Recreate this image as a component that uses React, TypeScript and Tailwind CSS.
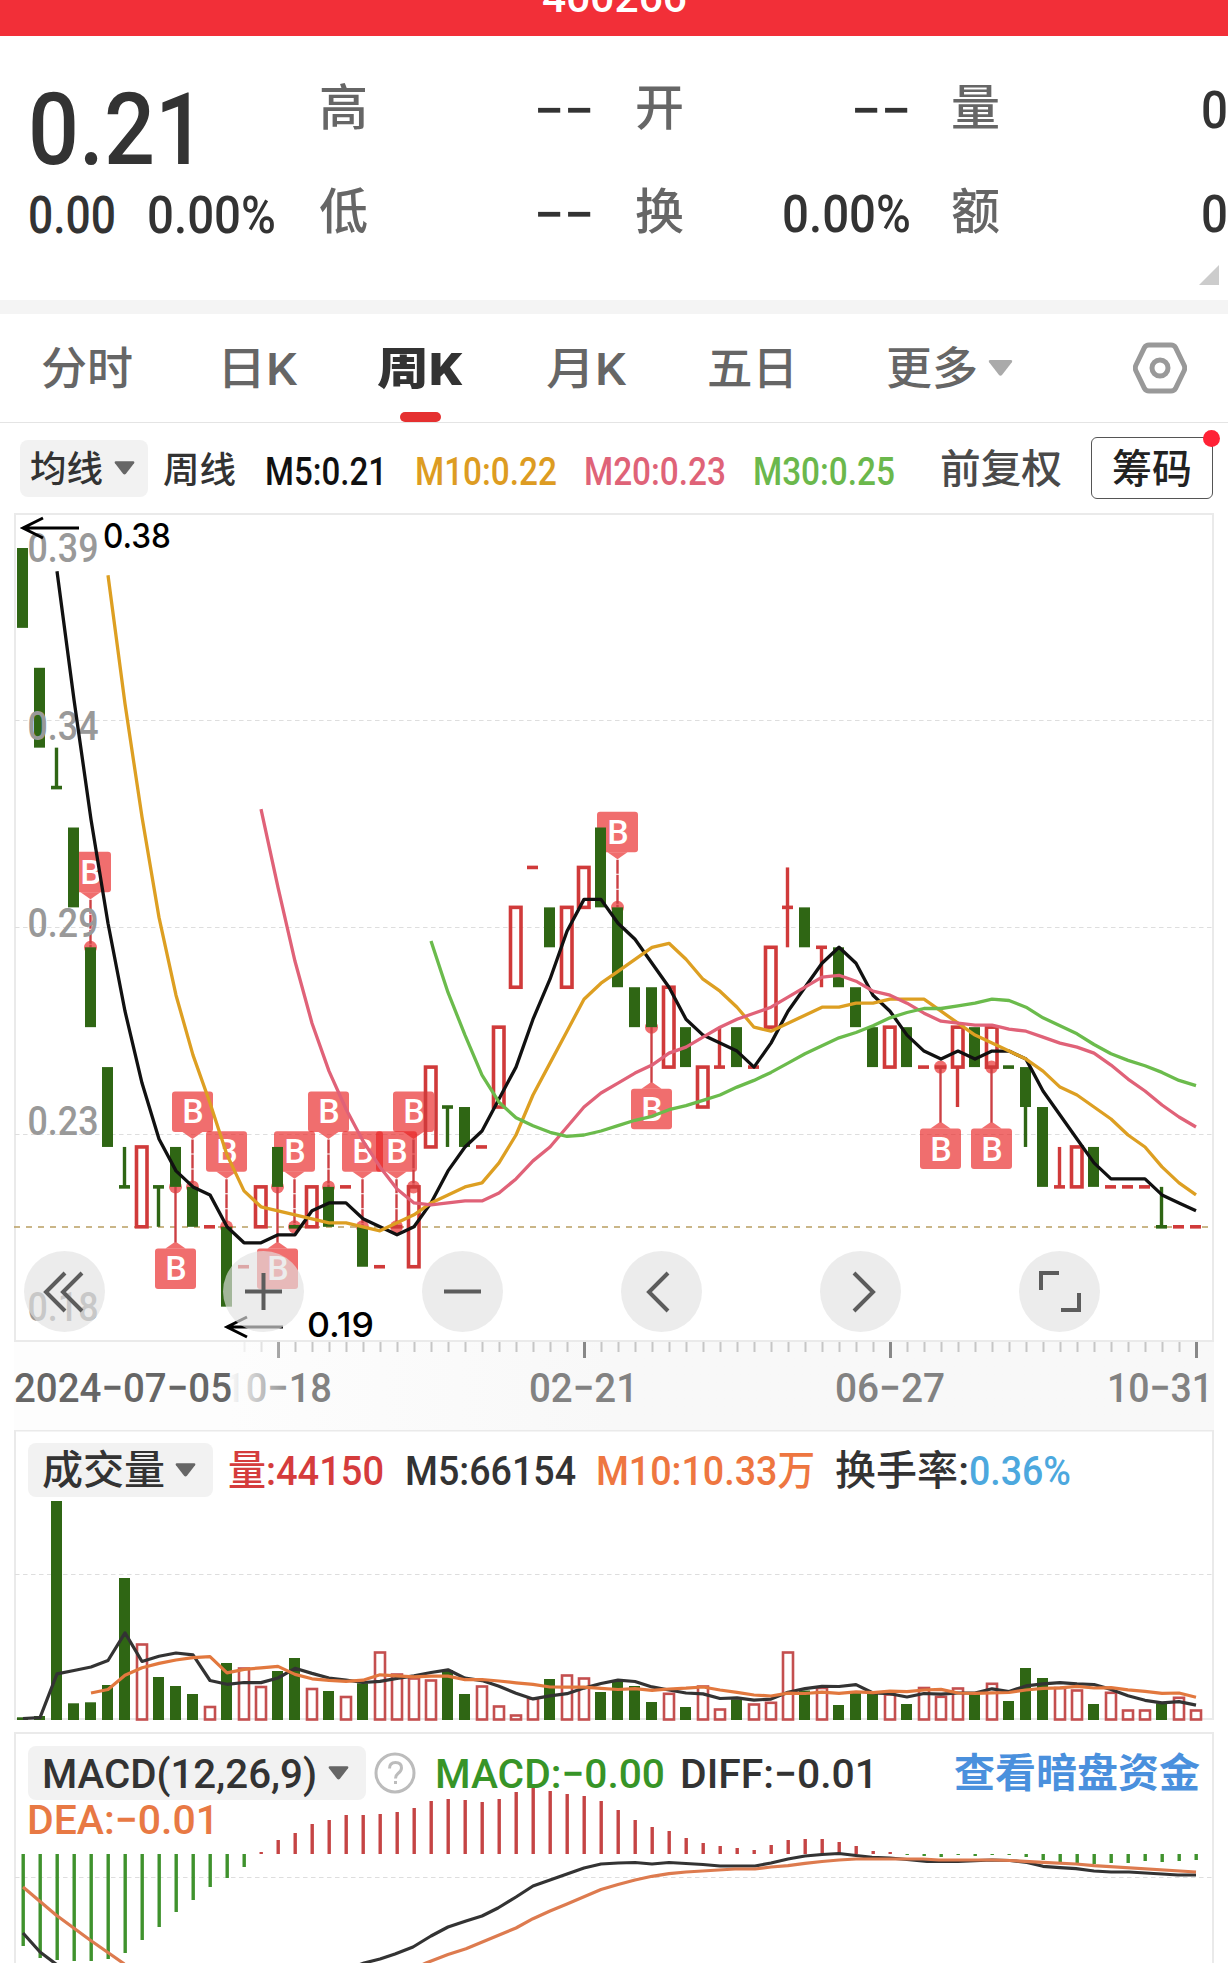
import { useLayoutEffect, useRef, useState } from 'react';
import type { ReactNode } from 'react';

const GREEN = '#2f6614';
const RED = '#d03a3a';
const STEP = 17;
const X0 = 22.5;

const cx = (i: number) => X0 + i * STEP;
// price in cents -> y
const py = (p: number) => 548 + (38 - p) * 39.93;

// [kind, open, close, high, low]
type Candle = ['g' | 'r', number, number, number?, number?];

const candles: Candle[] = [
    ['g', 38, 36], ['g', 35, 33], ['g', 32, 32, 33, 32], ['g', 31, 29], ['g', 28, 26],
    ['g', 25, 23], ['g', 22, 22, 23, 22], ['r', 21, 23], ['g', 22, 22, 22, 21], ['g', 23, 22],
    ['g', 22, 21], ['r', 21, 21], ['g', 21, 19], ['r', 20, 20], ['r', 21, 22],
    ['g', 23, 22], ['g', 21, 21], ['r', 21, 22], ['g', 22, 21], ['r', 22, 22],
    ['g', 21, 20], ['r', 20, 20], ['r', 21, 21], ['r', 20, 22], ['r', 23, 25],
    ['g', 24, 24, 24, 23], ['g', 24, 23], ['r', 23, 23], ['r', 24, 26], ['r', 27, 29],
    ['r', 30, 30], ['g', 29, 28], ['r', 27, 29], ['r', 29, 30], ['g', 31, 29],
    ['g', 29, 27], ['g', 27, 26], ['g', 27, 26], ['r', 25, 27], ['g', 26, 25],
    ['r', 24, 25], ['r', 25, 25, 26, 25], ['g', 26, 25], ['r', 25, 25], ['r', 26, 28],
    ['r', 29, 29, 30, 28], ['g', 29, 28], ['r', 28, 28, 28, 27], ['g', 28, 27], ['g', 27, 26],
    ['g', 26, 25], ['r', 25, 26], ['g', 26, 25], ['r', 25, 25], ['r', 25, 25],
    ['r', 25, 26, 26, 24], ['g', 26, 25], ['r', 25, 26], ['g', 25, 25], ['g', 25, 24, 25, 23],
    ['g', 24, 22], ['r', 22, 22, 23, 22], ['r', 22, 23], ['g', 23, 22], ['r', 22, 22],
    ['r', 22, 22], ['r', 22, 22], ['g', 21, 21, 22, 21], ['r', 21, 21], ['r', 21, 21],
];

const buys: { i: number; p: number; up?: boolean }[] = [
    { i: 4, p: 28, up: true }, { i: 9, p: 22 }, { i: 10, p: 22, up: true }, { i: 12, p: 21, up: true },
    { i: 15, p: 22 }, { i: 16, p: 21, up: true }, { i: 18, p: 22, up: true }, { i: 20, p: 21, up: true },
    { i: 22, p: 21, up: true }, { i: 23, p: 22, up: true }, { i: 35, p: 29, up: true }, { i: 37, p: 26 },
    { i: 54, p: 25 }, { i: 57, p: 25 },
];

const volumes = [
    2.7, 4, 219, 16.7, 17.7, 35, 142, 76, 43, 34, 26, 13.5, 57, 52, 33.5, 49, 62, 31.5, 29, 23.5,
    36.7, 68, 46, 42, 40, 50, 26, 34, 14, 5, 21.7, 41, 45, 42, 28, 38.5, 34, 18, 26.7, 13,
    34, 11, 20.7, 16, 17.7, 68, 29.5, 32.5, 15, 27, 26, 26, 16, 32.5, 23.7, 32, 26, 36.7, 19, 52,
    42, 32.5, 30, 16, 27.7, 10, 10, 16.7, 22.7, 10,
];

const macd = [
    -92, -104, -106, -107, -107, -105, -99, -86, -73, -58, -46, -33, -24, -13, 2, 14, 21, 30, 34, 39,
    39, 40, 42, 46, 53, 55, 54, 52, 55, 62, 66, 63, 60, 58, 53, 44, 34, 27, 23, 16,
    11, 8, 6, 4, 9, 14, 15, 15, 12, 8, 3, 2, -1, -2, -3, -1, -2, -1, -1, -3,
    -6, -10, -9, -10, -9, -9, -7, -8, -7, -6,
];

const diffPts =
    '23,1933 40,1952 56,1964 72,1978 200,2040 320,1980 364,1963 380,1959 395,1954 413,1947 431,1936 448,1927 466,1921 482,1916 498,1908 516,1897 533,1886 550,1880 567,1874 584,1868 601,1864 618,1863 635,1862.5 652,1864 669,1862.5 703,1864.5 720,1866 755,1866 771,1863 788,1859 805,1856 822,1854.5 839,1853.5 856,1855.5 872,1857.3 890,1858 907,1859.5 927,1861.3 958,1861.3 992,1860 1010,1860.5 1027,1862.5 1043,1866.3 1060,1867.7 1076,1868.7 1094,1871 1111,1872 1129,1872 1162,1874 1178,1875 1196,1875';
const deaPts =
    '23,1887 56,1915 90,1940 123,1963 200,2030 400,1975 426,1963 448,1954.5 466,1948.7 516,1928 533,1918.7 550,1911 567,1904 601,1889.5 618,1884.5 635,1880 652,1876.3 669,1873.7 686,1872 735,1869 755,1869 771,1867 788,1865.7 805,1863.3 822,1861.5 839,1860 856,1859 923,1859 939,1860 992,1860 1010,1860.5 1043,1862.3 1076,1864 1094,1865.7 1196,1872';

const closes = candles.map((c) => c[2]);

// head holds the points whose window reaches back before the visible range
function priceLine(n: number, head: number[]) {
    const start = n - 1 - head.length;
    const vals = [...head];
    for (let i = n - 1; i < closes.length; i++) {
        vals.push(closes.slice(i - n + 1, i + 1).reduce((a, b) => a + b, 0) / n);
    }
    return vals.map((v, k) => `${cx(start + k) + 0.5},${py(v).toFixed(1)}`).join(' ');
}

function volumeLine(n: number, from: number) {
    return volumes
        .map((_, i) => {
            const sum = volumes.slice(Math.max(0, i - n + 1), i + 1).reduce((a, b) => a + b, 0);
            return `${cx(i) + 0.5},${(1719 - sum / n).toFixed(1)}`;
        })
        .slice(from)
        .join(' ');
}

// Squeezes its text to the given advance width
function Fit({ w, className = '', children }: { w: number; className?: string; children: ReactNode }) {
    const ref = useRef<HTMLSpanElement>(null);
    const [k, setK] = useState(1);
    useLayoutEffect(() => {
        if (ref.current) setK(w / ref.current.getBoundingClientRect().width);
    }, []);
    return (
        <span className={`inline-block shrink-0 whitespace-nowrap ${className}`} style={{ width: w }}>
            <span ref={ref} className="inline-block origin-left" style={{ transform: `scaleX(${k})` }}>
                {children}
            </span>
        </span>
    );
}

function Caret({ className = '' }: { className?: string }) {
    return (
        <svg viewBox="0 0 22 14" className={`shrink-0 ${className}`} fill="currentColor">
            <path d="M2 0h18q2 0 1 2L12.500 13q-1.500 1.500-3 0L1 2Q0 0 2 0z" />
        </svg>
    );
}

function Quote() {
    return (
        <section className="relative flex h-[264px] pl-[28px] pt-[35px] text-[#333]">
            <div className="-mt-px w-[291px]">
                <div className="h-[120px] text-[101px] leading-[120px] font-medium">
                    <Fit w={178}>0.21</Fit>
                </div>
                <div className="flex gap-[31px] text-[51px] leading-[52px] font-medium">
                    <Fit w={88}>0.00</Fit>
                    <Fit w={129}>0.00%</Fit>
                </div>
            </div>
            <div className="grid grid-cols-[275px_41px_276px_40px_277px] grid-rows-[80px_104px] text-[51px] leading-[80px] font-medium">
                <Stat label="高" w={60}>−−</Stat>
                <i />
                <Stat label="开" w={60}>−−</Stat>
                <i />
                <Stat label="量" w={27}>0</Stat>
                <Stat label="低" w={60} low>−−</Stat>
                <i />
                <Stat label="换" w={129} low>0.00%</Stat>
                <i />
                <Stat label="额" w={27} low>0</Stat>
            </div>
            <svg viewBox="0 0 20 20" className="absolute right-[9px] bottom-[15px] size-5">
                <path d="M20 0v20H0z" fill="#ccc" />
            </svg>
        </section>
    );
}

function Stat({ label, w, low, children }: { label: string; w: number; low?: boolean; children: ReactNode }) {
    return (
        <div className={low ? 'flex justify-between pt-6' : 'flex justify-between'}>
            <span className="-mt-[2px] text-[49px] text-[#666]">{label}</span>
            <Fit w={w}>{children}</Fit>
        </div>
    );
}

function Tabs() {
    return (
        <nav className="relative flex h-[109px] border-b border-[#e4e4e4] pl-[41px] text-[45px] leading-[112px] font-medium text-[#666]">
            <Fit w={92} className="mr-[84px]">分时</Fit>
            <Fit w={80} className="mr-[80px]">日K</Fit>
            <div className="relative mr-[84px] font-black text-[#333]">
                <Fit w={85}>周K</Fit>
                <span className="absolute bottom-0 left-[23px] h-[10px] w-[41px] rounded-full bg-[#e53030]" />
            </div>
            <Fit w={80} className="mr-[81px]">月K</Fit>
            <Fit w={91} className="mr-[88px]">五日</Fit>
            <Fit w={92} className="mr-[10px]">更多</Fit>
            <Caret className="mt-[44px] h-[20px] w-[25px] text-[#aaa]" />
            <svg viewBox="0 0 54 52" className="ml-[120px] mt-[28px] h-[52px] w-[54px]" fill="none" stroke="#999">
                <path d="M16 3h22q3 0 4.500 2.500L51 23q1.500 3 0 6l-8.500 17.500Q41 49 38 49H16q-3 0-4.500-2.500L3 29q-1.500-3 0-6l8.500-17.500Q13 3 16 3z" strokeWidth="5" />
                <circle cx="27" cy="26" r="8" strokeWidth="5" />
            </svg>
        </nav>
    );
}

function Averages() {
    return (
        <div className="flex h-[90px] items-center pl-5 text-[38px] font-medium">
            <div className="flex h-[57px] w-[128px] items-center gap-[11px] rounded-lg bg-[#f2f2f2] pl-[10px] text-[36px] text-[#333]">
                <Fit w={73} className="mt-[3px]">均线</Fit>
                <Caret className="h-[14px] w-[21px] text-[#666]" />
            </div>
            <Fit w={73} className="ml-[15px] mt-[6px] text-[36px] text-[#333]">周线</Fit>
            <Fit w={122} className="ml-[29px] mt-[8px] text-[#111]">M5:0.21</Fit>
            <Fit w={142} className="ml-[28px] mt-[8px] text-[#dd9c22]">M10:0.22</Fit>
            <Fit w={142} className="ml-[27px] mt-[8px] text-[#df6378]">M20:0.23</Fit>
            <Fit w={142} className="ml-[27px] mt-[8px] text-[#6bb84c]">M30:0.25</Fit>
            <Fit w={122} className="ml-[45px] mt-[4px] text-[40px] text-[#4a4a4a]">前复权</Fit>
            <div className="relative ml-[29px] flex h-[62px] w-[122px] items-center justify-center rounded-md border border-[#555] pt-[3px] text-[40px] text-[#222]">
                <Fit w={80}>筹码</Fit>
                <span className="absolute -right-[8px] -top-[8px] size-[17px] rounded-full bg-[#ff2236]" />
            </div>
        </div>
    );
}

function Bar({ c, i }: { c: Candle; i: number }) {
    const [kind, open, close, high, low] = c;
    const x = cx(i);
    const color = kind === 'g' ? GREEN : RED;
    const top = py(Math.max(open, close));
    const bottom = py(Math.min(open, close));
    return (
        <g fill={color} stroke="none">
            {high !== undefined && low !== undefined && (open === close
                ? <rect x={x - 1.7} y={py(high)} width="3.4" height={py(low) - py(high)} />
                : <rect x={x - 1.7} y={bottom} width="3.4" height={py(low) - bottom} />)}
            {open === close && <rect x={x - 5.5} y={top - 1.8} width="11" height="3.6" />}
            {open !== close && kind === 'g' && <rect x={x - 5.5} y={top} width="11" height={bottom - top} />}
            {open !== close && kind === 'r' && (
                <rect x={x - 5} y={top} width="10.500" height={bottom - top} fill="none" stroke={color} strokeWidth="3.600" />
            )}
        </g>
    );
}

function Buy({ i, p, up }: { i: number; p: number; up?: boolean }) {
    const x = cx(i);
    const y = py(p);
    const box = up ? y - 95.5 : y + 61.5;
    return (
        <g>
            <g fill="#e82020" fillOpacity="0.65">
                <circle cx={x} cy={y} r="6.500" />
                <rect x={x - 20.5} y={box} width="41" height="40.500" rx="3" />
                <path d={up ? `M${x - 10} ${box + 40.5}h20l-10 7z` : `M${x - 10} ${box}h20l-10-7z`} />
            </g>
            <line
                x1={x} x2={x} y1={up ? box + 48 : y} y2={up ? y : box - 6}
                stroke="#cc4044" strokeWidth="2.400" strokeDasharray={up ? '14 1' : undefined}
            />
            <text x={x + 0.5} y={box + 32} textAnchor="middle" fontSize="34" fontWeight="500" fill="#fff">B</text>
        </g>
    );
}

const gridLabels = [
    { t: '0.39', y: 562 }, { t: '0.34', y: 739.5 }, { t: '0.29', y: 936.5 },
    { t: '0.23', y: 1134.5 }, { t: '0.18', y: 1321 },
];

const controls: ReactNode[] = [
    <path d="M41 22 22 41l19 19M58 22 39 41l19 19" />,
    <path d="M22 40.500h37M40.500 22v37" />,
    <path d="M22 40.500h37" />,
    <path d="M47 22 28 41l19 19" />,
    <path d="M34 22l19 19-19 19" />,
    <path d="M22 39V22h18M42 59h18V42" />,
];

function PriceChart() {
    return (
        <div className="relative h-[829px]">
            <svg viewBox="0 513 1228 829" className="block h-[829px] w-[1228px]" fill="none">
                <path d="M15 1341V514H1213V1341z" stroke="#eaeaea" strokeWidth="2" />
                <g stroke="#dedede" strokeWidth="1.200" strokeDasharray="4.500 3.500">
                    <path d="M15 720.500H1212M15 927.500H1212M15 1134.500H1212" />
                </g>
                <path d="M14 1227H1210" stroke="#b99e62" strokeWidth="1.700" strokeDasharray="6 6" />
                {buys.map((b) => <Buy key={b.i} {...b} />)}
                {candles.map((c, i) => <Bar key={i} c={c} i={i} />)}
                {gridLabels.map((l) => (
                    <text key={l.t} x="27.500" y={l.y} fontSize="41" fontWeight="500" fill="#999" textLength="71" lengthAdjust="spacingAndGlyphs">{l.t}</text>
                ))}
                <g strokeWidth="3.300" strokeLinejoin="round">
                    <polyline points={priceLine(5, [37.42, 34.2])} stroke="#111" />
                    <polyline points={priceLine(10, [37.32, 34.1, 31.26, 28.75])} stroke="#dd9f22" />
                    <polyline points={priceLine(20, [31.46, 29.5, 27.65, 26.1, 24.9])} stroke="#e06278" />
                    <polyline points={priceLine(30, [28.16, 26.87, 25.8, 24.8, 24.12])} stroke="#6bbb4c" />
                </g>
                <g stroke="#000" strokeWidth="3">
                    <path d="M79 528H23M43 518l-20 10 20 10" />
                    <path d="M283 1327H227M247 1317l-20 10 20 10" />
                </g>
                <g fill="#000" fontSize="34" fontWeight="500" fontFamily="Inter, sans-serif">
                    <text x="103" y="548" textLength="68" lengthAdjust="spacingAndGlyphs">0.38</text>
                    <text x="307" y="1337" textLength="67" lengthAdjust="spacingAndGlyphs">0.19</text>
                </g>
            </svg>
            <div className="absolute bottom-[10px] left-[24px] flex gap-[118px]">
                {controls.map((c, i) => (
                    <button key={i} className="size-[81px] rounded-full bg-[#e2e2e2]/65">
                        <svg viewBox="0 0 81 81" className="size-full" fill="none" stroke="#5c5c5c" strokeWidth="4">{c}</svg>
                    </button>
                ))}
            </div>
        </div>
    );
}

function TimeAxis() {
    return (
        <div className="mx-[14px] h-[88px] bg-linear-to-r from-white from-5% to-[#f8f8f8] to-50%">
            <svg viewBox="14 1342 1200 88" className="block h-[88px] w-[1200px]">
                <defs>
                    <linearGradient id="fade">
                        <stop offset="0.76" stopColor="#fdfdfd" />
                        <stop offset="1" stopColor="#fcfcfc" stopOpacity="0" />
                    </linearGradient>
                </defs>
                {candles.map((_, i) => {
                    const major = i % 18 === 15;
                    return (
                        <rect
                            key={i} x={cx(i) - (major ? 0.5 : 0)} y="1342" width={major ? 3 : 2}
                            height={major ? 16 : 10} fill={major ? '#888' : '#c6c6c6'}
                        />
                    );
                })}
                <g fontSize="41" fontWeight="500" fill="#828282">
                    <text x="224" y="1402" textLength="108" lengthAdjust="spacingAndGlyphs">10−18</text>
                    <text x="529" y="1402" textLength="109" lengthAdjust="spacingAndGlyphs">02−21</text>
                    <text x="835" y="1402" textLength="110" lengthAdjust="spacingAndGlyphs">06−27</text>
                    <text x="1107" y="1402" textLength="106" lengthAdjust="spacingAndGlyphs">10−31</text>
                    <rect x="14" y="1342" width="282" height="88" fill="url(#fade)" />
                    <text x="14" y="1402" fill="#666" textLength="218" lengthAdjust="spacingAndGlyphs">2024−07−05</text>
                </g>
            </svg>
        </div>
    );
}

function Volume() {
    return (
        <section className="relative h-[302px]">
            <svg viewBox="0 1430 1228 302" className="absolute inset-0 h-[302px] w-[1228px]" fill="none">
                <path d="M15 1719V1430.500H1213V1719z" stroke="#eaeaea" strokeWidth="2" />
                <path d="M15 1574.500H1212" stroke="#dedede" strokeWidth="1.200" strokeDasharray="4.500 3.500" />
                {volumes.map((v, i) => candles[i][0] === 'g'
                    ? <rect key={i} x={cx(i) - 5.5} y={1720 - v} width="11" height={v} fill={GREEN} />
                    : <rect key={i} x={cx(i) - 4.5} y={1720 - v + 0.5} width="10" height={v - 1} stroke="#c44f4f" strokeWidth="2.600" />)}
                <g strokeWidth="3.200" strokeLinejoin="round">
                    <polyline points={volumeLine(5, 0)} stroke="#333" />
                    <polyline points={volumeLine(10, 4)} stroke="#e2783e" />
                </g>
            </svg>
            <div className="relative flex items-center pl-[28px] pt-[13px] text-[41px] leading-[52px] font-medium text-[#333]">
                <div className="flex h-[54px] w-[185px] items-center gap-[10px] rounded-lg bg-[#f2f2f2] pl-[14px] text-[40px]">
                    <Fit w={123} className="mt-[2px]">成交量</Fit>
                    <Caret className="h-[14px] w-[21px] text-[#666]" />
                </div>
                <Fit w={156} className="ml-[15px] mt-[2px] text-[#d53c3c]">量:44150</Fit>
                <Fit w={171} className="ml-[21px] mt-[2px]">M5:66154</Fit>
                <Fit w={219} className="ml-[20px] mt-[2px] text-[#ee7640]">M10:10.33万</Fit>
                <Fit w={134} className="ml-[20px] mt-[2px]">换手率:</Fit>
                <Fit w={102} className="mt-[2px] text-[#4ca8de]">0.36%</Fit>
            </div>
        </section>
    );
}

function Macd() {
    return (
        <section className="relative h-[231px] overflow-hidden">
            <svg viewBox="0 1732 1228 231" className="absolute inset-0 h-[231px] w-[1228px]" fill="none">
                <path d="M15 1980V1733H1213V1980z" stroke="#eaeaea" strokeWidth="2" />
                <path d="M15 1877.500H1212" stroke="#dedede" strokeWidth="1.200" strokeDasharray="4.500 3.500" />
            </svg>
            <div className="relative flex items-center pl-[28px] pr-[28px] pt-[14px] text-[41px] leading-[52px] font-medium text-[#333]">
                <div className="flex h-[54px] w-[338px] items-center gap-[11px] rounded-lg bg-[#f2f2f2] pl-[14px]">
                    <Fit w={275} className="mt-[2px]">MACD(12,26,9)</Fit>
                    <Caret className="h-[14px] w-[21px] text-[#666]" />
                </div>
                <svg viewBox="0 0 42 42" className="ml-[8px] size-[42px]" fill="none" stroke="#bcbcbc" strokeWidth="3">
                    <circle cx="21" cy="21" r="19" />
                    <path d="M15.500 16.500q0-6 6-6t6 5.500q0 3-3.500 5.500-2.500 2-2.500 5M21.500 29v3" />
                </svg>
                <Fit w={230} className="ml-[19px] mt-[2px] text-[#379427]">MACD:−0.00</Fit>
                <Fit w={198} className="ml-[15px] mt-[2px]">DIFF:−0.01</Fit>
                <Fit w={246} className="ml-auto mt-[2px] text-[40px] font-bold text-[#4a90dd]">查看暗盘资金</Fit>
            </div>
            <Fit w={192} className="relative ml-[27px] -mt-[7px] text-[41px] leading-[54px] font-medium text-[#e87944]">
                DEA:−0.01
            </Fit>
            <svg viewBox="0 1732 1228 231" className="absolute inset-0 h-[231px] w-[1228px]" fill="none">
                {macd.map((v, i) => (
                    <rect
                        key={i} x={cx(i) - 1} y={v > 0 ? 1854 - v : 1854} width="3.400" height={Math.abs(v)}
                        fill={v > 0 ? '#c54444' : '#3f922d'}
                    />
                ))}
                <g strokeWidth="3.200" strokeLinejoin="round">
                    <polyline points={diffPts} stroke="#333" />
                    <polyline points={deaPts} stroke="#dd7b4f" />
                </g>
            </svg>
        </section>
    );
}

export default function App() {
    return (
        <main className="h-[1963px] w-[1228px] overflow-hidden bg-white font-[Roboto,'Noto_Sans_CJK_SC',sans-serif] [&_svg]:font-[Roboto]">
            <header className="flex h-[36px] items-end justify-center overflow-hidden bg-[#f22f38] text-white">
                <Fit w={145} className="mb-[14px] text-[43px] leading-[50px] font-medium">400266</Fit>
            </header>
            <Quote />
            <div className="h-[14px] bg-[#f4f4f4]" />
            <Tabs />
            <Averages />
            <PriceChart />
            <TimeAxis />
            <Volume />
            <Macd />
        </main>
    );
}
